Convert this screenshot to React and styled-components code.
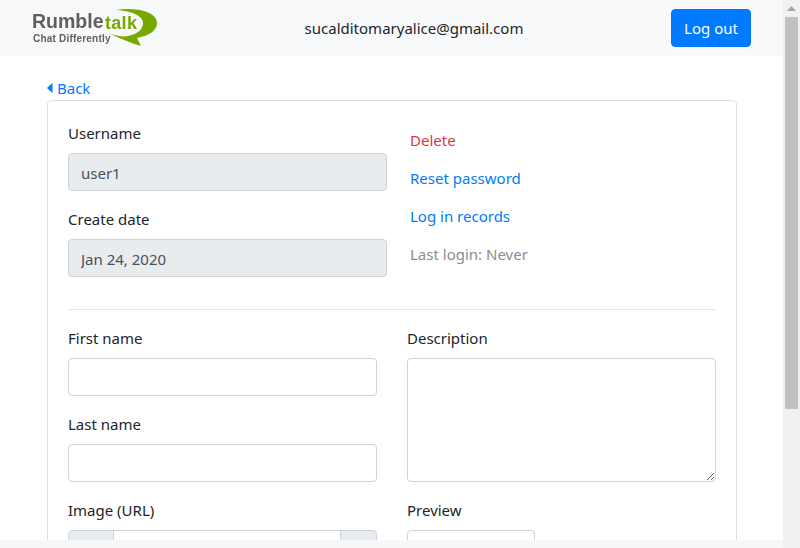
import React from 'react'
import styled, { createGlobalStyle } from 'styled-components'

const GlobalStyle = createGlobalStyle`
    html, body {
        margin: 0;
        padding: 0;
        overflow: hidden;
        background: #fff;
    }
    * {
        box-sizing: border-box;
    }
    body {
        font-family: "Noto Sans", "Open Sans", sans-serif;
        font-size: 15px;
        line-height: 24px;
        color: #212529;
    }
`

function Logo() {
    return (
        <LogoMark width="125" height="38" viewBox="0 0 125 38">
            <path
                d="M84 1 C102 -2 125 2 125 14 C125 22 116 27 105 29 L109 37 C98 34 88 29 76 24 C84 27 92 28 96 27 C106 25 111 20 111 14 C111 6 98 2 84 1 Z"
                fill="#78a900"
            />
            <text x="0" y="19" fontFamily="Liberation Sans" fontWeight="700" fontSize="19.5" fill="#5f5f5f">Rumble</text>
            <text x="73" y="20" fontFamily="Liberation Sans" fontWeight="700" fontSize="18" letterSpacing="0.3" fill="#7aa800">talk</text>
            <text x="1" y="33" fontFamily="Liberation Sans" fontWeight="700" fontSize="10" letterSpacing="0.2" fill="#5f5f5f">Chat Differently</text>
        </LogoMark>
    )
}

function Field({ label, value, disabled }) {
    return (
        <FormGroup>
            <Label>{label}</Label>
            <Input value={value || ''} disabled={disabled} readOnly />
        </FormGroup>
    )
}

export default function App() {
    return (
        <Shell>
            <GlobalStyle />
            <Page>
                <Viewport>
                    <Header>
                        <Logo />
                        <Email>sucalditomaryalice@gmail.com</Email>
                        <LogoutButton>Log out</LogoutButton>
                    </Header>
                    <Content>
                        <BackLink href="#">
                            <svg width="6" height="10" viewBox="0 0 6 10">
                                <polygon points="5.5,0 0,5 5.5,10" fill="#007bff" />
                            </svg>
                            Back
                        </BackLink>
                        <Card>
                            <TopRow>
                                <div>
                                    <Field label="Username" value="user1" disabled />
                                    <Field label="Create date" value="Jan 24, 2020" disabled />
                                </div>
                                <Actions>
                                    <ActionLink href="#" $color="#dc3545">Delete</ActionLink>
                                    <ActionLink href="#">Reset password</ActionLink>
                                    <ActionLink href="#">Log in records</ActionLink>
                                    <LastLogin>Last login: Never</LastLogin>
                                </Actions>
                            </TopRow>
                            <Divider />
                            <FormRow>
                                <div>
                                    <Field label="First name" />
                                    <Field label="Last name" />
                                </div>
                                <FormGroup>
                                    <Label>Description</Label>
                                    <TextArea readOnly />
                                </FormGroup>
                            </FormRow>
                            <FormRow>
                                <FormGroup>
                                    <Label>Image (URL)</Label>
                                    <InputGroup>
                                        <Addon $width="46px" />
                                        <GroupInput readOnly />
                                        <Addon $width="37px" />
                                    </InputGroup>
                                </FormGroup>
                                <FormGroup>
                                    <Label>Preview</Label>
                                    <PreviewBox />
                                </FormGroup>
                            </FormRow>
                        </Card>
                    </Content>
                </Viewport>
                <BottomStrip />
            </Page>
            <ScrollTrack>
                <ScrollArrow>
                    <svg width="9" height="5" viewBox="0 0 9 5">
                        <polygon points="4.5,0 9,5 0,5" fill="#a3a3a3" />
                    </svg>
                </ScrollArrow>
                <ScrollThumb />
            </ScrollTrack>
        </Shell>
    )
}

const Shell = styled.div`
    display: flex;
    width: 800px;
    height: 548px;
    overflow: hidden;
`
const Page = styled.div`
    display: flex;
    flex-direction: column;
    flex: 1;
    min-width: 0;
`
const Viewport = styled.div`
    flex: 1;
    min-height: 0;
    overflow: hidden;
`
const BottomStrip = styled.div`
    height: 8px;
    background: #f6f7f9;
`
const ScrollTrack = styled.div`
    width: 17px;
    background: #f1f1f1;
    padding: 0 2px 0 2px;
`
const ScrollArrow = styled.div`
    height: 17px;
    display: flex;
    align-items: center;
    justify-content: center;
`
const ScrollThumb = styled.div`
    height: 392px;
    background: #c1c1c1;
`
const Header = styled.header`
    height: 56px;
    padding: 0 32px;
    display: flex;
    align-items: center;
    justify-content: space-between;
    background: #f8f9fa;
`
const LogoMark = styled.svg`
    display: block;
    filter: blur(0.3px);
`
const Email = styled.span`
    color: #212529;
`
const LogoutButton = styled.button`
    width: 80px;
    height: 38px;
    padding: 0;
    border: 1px solid #007bff;
    border-radius: 4px;
    background: #007bff;
    color: #fff;
    font: inherit;
`
const Content = styled.main`
    padding: 20px 46px 0 47px;
`
const BackLink = styled.a`
    display: flex;
    align-items: center;
    gap: 4px;
    height: 24px;
    color: #007bff;
    text-decoration: none;
`
const Card = styled.section`
    border: 1px solid rgba(0, 0, 0, 0.125);
    border-radius: 4px;
    padding: 20px;
`
const TopRow = styled.div`
    display: grid;
    grid-template-columns: 319px 1fr;
    column-gap: 23px;
`
const FormRow = styled.div`
    display: grid;
    grid-template-columns: 309px 309px;
    column-gap: 30px;
`
const FormGroup = styled.div`
    margin-bottom: 16px;
`
const Label = styled.label`
    display: block;
    margin-bottom: 8px;
`
const Input = styled.input`
    display: block;
    width: 100%;
    height: 38px;
    padding: 7px 12px 5px;
    border: 1px solid #ced4da;
    border-radius: 4px;
    background: ${props => (props.disabled ? '#e9ecef' : '#fff')};
    color: #495057;
    font: inherit;
    opacity: 1;
`
const TextArea = styled.textarea`
    display: block;
    width: 100%;
    height: 124px;
    padding: 6px 12px;
    border: 1px solid #ced4da;
    border-radius: 4px;
    font: inherit;
`
const Actions = styled.div`
    display: flex;
    flex-direction: column;
    gap: 14px;
    padding-top: 7px;
`
const ActionLink = styled.a`
    color: ${props => props.$color || '#007bff'};
    text-decoration: none;
`
const LastLogin = styled.span`
    color: #868e96;
`
const Divider = styled.hr`
    margin: 16px 0;
    border: 0;
    border-top: 1px solid rgba(0, 0, 0, 0.1);
`
const InputGroup = styled.div`
    display: flex;
    height: 38px;
`
const Addon = styled.div`
    width: ${props => props.$width};
    background: #e9ecef;
    border: 1px solid #ced4da;
    &:first-child {
        border-radius: 4px 0 0 4px;
    }
    &:last-child {
        border-radius: 0 4px 4px 0;
    }
`
const GroupInput = styled.input`
    flex: 1;
    min-width: 0;
    margin: 0 -1px;
    border: 1px solid #ced4da;
    font: inherit;
`
const PreviewBox = styled.div`
    width: 128px;
    height: 100px;
    border: 1px solid #ced4da;
    border-radius: 4px;
`
